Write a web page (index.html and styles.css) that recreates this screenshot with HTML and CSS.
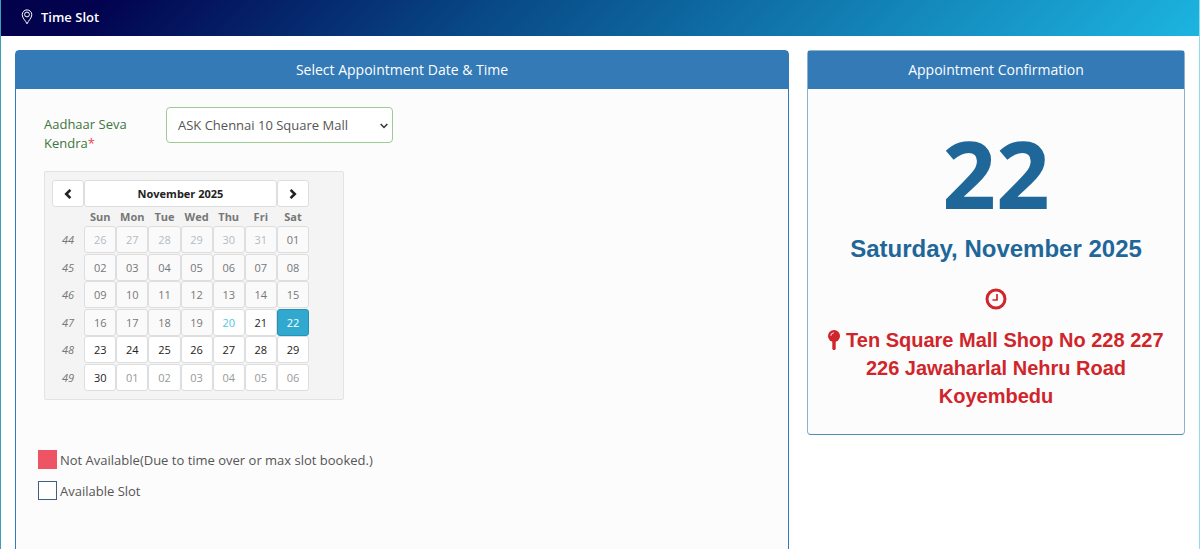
FILE: index.html
```
<!DOCTYPE html>
<html lang="en">
<head>
    <meta charset="UTF-8">
    <meta name="viewport" content="width=device-width, initial-scale=1.0">
    <title>Time Slot</title>
    <link rel="stylesheet" href="styles.css">
</head>

<body>
    <div class="page">

        <header class="page-header">
            <svg class="pin-outline" viewBox="0 0 12 16" fill="none" stroke="currentColor">
                <path d="M6 14.8 C4.5 11.5 1.2 9 1.2 5.7 A4.8 4.8 0 0 1 10.8 5.7 C10.8 9 7.5 11.5 6 14.8 Z" />
                <circle cx="6" cy="5.5" r="2.4" />
            </svg>
            <h1>Time Slot</h1>
        </header>

        <main class="content">

            <!-- Date selection -->
            <section class="panel">
                <h2 class="panel-heading">Select Appointment Date &amp; Time</h2>

                <form class="slot-form" action="#" method="post">
                    <div class="form-group">
                        <label for="kendra">Aadhaar Seva Kendra<span class="required">*</span></label>
                        <div class="select-box">
                            <select id="kendra" name="kendra">
                                <option>ASK Chennai 10 Square Mall</option>
                            </select>
                            <svg class="caret" viewBox="0 0 8 6" fill="none" stroke="currentColor" stroke-width="1.5">
                                <path d="M0.7 1 L4 4.5 L7.3 1" />
                            </svg>
                        </div>
                    </div>

                    <div class="calendar">
                        <table>
                            <thead>
                                <tr class="month-row">
                                    <th><button type="button" aria-label="Previous month"><svg class="chevron" viewBox="0 0 8 12"><path d="M6.4 1.8 L2.2 6 L6.4 10.2" /></svg></button></th>
                                    <th colspan="6"><button type="button" class="month">November 2025</button></th>
                                    <th><button type="button" aria-label="Next month"><svg class="chevron" viewBox="0 0 8 12"><path d="M1.6 1.8 L5.8 6 L1.6 10.2" /></svg></button></th>
                                </tr>
                                <tr class="day-names">
                                    <th></th>
                                    <th>Sun</th>
                                    <th>Mon</th>
                                    <th>Tue</th>
                                    <th>Wed</th>
                                    <th>Thu</th>
                                    <th>Fri</th>
                                    <th>Sat</th>
                                </tr>
                            </thead>
                            <tbody>
                                <tr>
                                    <td class="week">44</td>
                                    <td><button type="button" class="muted" disabled>26</button></td>
                                    <td><button type="button" class="muted" disabled>27</button></td>
                                    <td><button type="button" class="muted" disabled>28</button></td>
                                    <td><button type="button" class="muted" disabled>29</button></td>
                                    <td><button type="button" class="muted" disabled>30</button></td>
                                    <td><button type="button" class="muted" disabled>31</button></td>
                                    <td><button type="button" disabled>01</button></td>
                                </tr>
                                <tr>
                                    <td class="week">45</td>
                                    <td><button type="button" disabled>02</button></td>
                                    <td><button type="button" disabled>03</button></td>
                                    <td><button type="button" disabled>04</button></td>
                                    <td><button type="button" disabled>05</button></td>
                                    <td><button type="button" disabled>06</button></td>
                                    <td><button type="button" disabled>07</button></td>
                                    <td><button type="button" disabled>08</button></td>
                                </tr>
                                <tr>
                                    <td class="week">46</td>
                                    <td><button type="button" disabled>09</button></td>
                                    <td><button type="button" disabled>10</button></td>
                                    <td><button type="button" disabled>11</button></td>
                                    <td><button type="button" disabled>12</button></td>
                                    <td><button type="button" disabled>13</button></td>
                                    <td><button type="button" disabled>14</button></td>
                                    <td><button type="button" disabled>15</button></td>
                                </tr>
                                <tr>
                                    <td class="week">47</td>
                                    <td><button type="button" disabled>16</button></td>
                                    <td><button type="button" disabled>17</button></td>
                                    <td><button type="button" disabled>18</button></td>
                                    <td><button type="button" disabled>19</button></td>
                                    <td><button type="button" class="today" disabled>20</button></td>
                                    <td><button type="button">21</button></td>
                                    <td><button type="button" class="selected">22</button></td>
                                </tr>
                                <tr>
                                    <td class="week">48</td>
                                    <td><button type="button">23</button></td>
                                    <td><button type="button">24</button></td>
                                    <td><button type="button">25</button></td>
                                    <td><button type="button">26</button></td>
                                    <td><button type="button">27</button></td>
                                    <td><button type="button">28</button></td>
                                    <td><button type="button">29</button></td>
                                </tr>
                                <tr>
                                    <td class="week">49</td>
                                    <td><button type="button">30</button></td>
                                    <td><button type="button" class="next-month">01</button></td>
                                    <td><button type="button" class="next-month">02</button></td>
                                    <td><button type="button" class="next-month">03</button></td>
                                    <td><button type="button" class="next-month">04</button></td>
                                    <td><button type="button" class="next-month">05</button></td>
                                    <td><button type="button" class="next-month">06</button></td>
                                </tr>
                            </tbody>
                        </table>
                    </div>
                </form>

                <ul class="legend">
                    <li><span class="box booked"></span>Not Available(Due to time over or max slot booked.)</li>
                    <li><span class="box"></span>Available Slot</li>
                </ul>
            </section>

            <!-- Chosen appointment -->
            <section class="panel confirmation">
                <h2 class="panel-heading">Appointment Confirmation</h2>
                <div class="summary">
                    <div class="day-number">22</div>
                    <div class="full-date">Saturday, November 2025</div>
                    <svg class="clock" viewBox="0 0 22 22" fill="none" stroke="currentColor">
                        <circle cx="11" cy="11" r="9" stroke-width="3" />
                        <path d="M12 6 V12 H7.5" stroke-width="1.7" />
                    </svg>
                    <p class="address">
                        <svg class="pin" viewBox="0 0 12 20" fill="currentColor">
                            <circle cx="6" cy="6" r="6" />
                            <path d="M4.3 11 H7.7 V18.5 L7 20 H5 L4.3 18.5 Z" />
                            <path d="M2.8 5.8 A3.2 3.2 0 0 1 5.8 2.8" fill="none" stroke="#fcfcfc" stroke-width="0.9" />
                        </svg>
                        Ten Square Mall Shop No 228 227 226 Jawaharlal Nehru Road Koyembedu
                    </p>
                </div>
            </section>

        </main>
    </div>
</body>

</html>
```
FILE: styles.css
```
* {
    box-sizing: border-box;
}

body {
    margin: 0;
    font-family: "Open Sans", "Noto Sans", sans-serif;
    font-size: 13px;
    color: #555;
    background-color: #fff;
}

.page {
    display: flex;
    flex-direction: column;
    height: 100vh;
    overflow: hidden;
    border-left: 1px solid #3ba0b4;
    border-right: 1px solid #8fdcec;
}

.page-header {
    flex: none;
    display: flex;
    align-items: center;
    gap: 8px;
    height: 36px;
    padding: 0 20px 2px;
    color: #fff;
    background: linear-gradient(135deg, #02024b 0%, #02024f 8%, #084886 40%, #1cb5e0 100%);
}

.page-header h1 {
    margin: 0;
    font-size: 13px;
    font-weight: 600;
}

.pin-outline {
    width: 12px;
    height: 16px;
}

.content {
    flex: 1;
    display: grid;
    grid-template-columns: 43fr 21fr;
    gap: 18px;
    padding: 14px 14px 0;
    min-height: 0;
    align-items: start;
}

.panel {
    min-height: 100vh;
    border: 1px solid #337ab7;
    border-radius: 4px;
    background-color: #fcfcfc;
}

.confirmation {
    min-height: 0;
    border-color: #8fb3cc;
    border-bottom-color: #4f8fae;
}

.panel-heading {
    margin: 0;
    font-size: 14px;
    font-weight: 400;
    line-height: 38px;
    text-align: center;
    color: #fff;
    background-color: #337ab7;
}

.slot-form {
    padding: 18px 28px 0;
}

.form-group {
    display: flex;
    align-items: flex-start;
    color: #3c763d;
}

.form-group label {
    width: 122px;
    padding: 8px 30px 0 0;
    line-height: 19px;
}

.required {
    color: #e8434c;
}

.select-box {
    position: relative;
    width: 227px;
}

.select-box select {
    width: 100%;
    height: 36px;
    padding: 0 24px 0 11px;
    border: 1px solid #9ccc94;
    border-radius: 4px;
    font-family: inherit;
    font-size: 13px;
    color: #555;
    background-color: #fff;
    appearance: none;
}

.caret {
    position: absolute;
    right: 5px;
    top: 16px;
    width: 8px;
    height: 6px;
    color: #333;
    pointer-events: none;
}

/* Calendar */
.calendar {
    width: 300px;
    margin-top: 18px;
    padding: 8px 7px;
    border: 1px solid #e3e3e3;
    border-radius: 2px;
    background-color: #f4f4f4;
}

.calendar table {
    width: 257px;
    height: 211px;
    table-layout: fixed;
    border-collapse: collapse;
    font-size: 11px;
}

.calendar th,
.calendar td {
    height: 27px;
    padding: 0;
    text-align: center;
}

.calendar .day-names th {
    height: 19px;
    line-height: 19px;
    color: #777;
}

.calendar .week {
    font-style: italic;
    color: #777;
}

.calendar button {
    display: block;
    width: 100%;
    height: 27px;
    padding: 0;
    border: 1px solid #dedede;
    border-radius: 3px;
    font-family: inherit;
    font-size: 11px;
    color: #222;
    background-color: #fff;
}

.calendar button:disabled {
    color: #777;
    background-color: #fafafa;
}

.calendar button.muted {
    color: #b4bcc4;
}

.calendar button.next-month {
    color: #999;
}

.calendar button.month {
    font-weight: 700;
}

.calendar button.today {
    color: #4cc8e0;
    background-color: #fff;
}

.calendar button.selected {
    color: #fff;
    border-color: #2493b5;
    background-color: #31a9cf;
}

.chevron {
    display: block;
    width: 8px;
    height: 12px;
    margin: 0 auto;
    fill: none;
    stroke: #222;
    stroke-width: 2.6;
}

/* Legend */
.legend {
    margin: 0;
    padding: 50px 22px 0;
    list-style: none;
}

.legend li {
    display: flex;
    align-items: center;
    gap: 3px;
    height: 19px;
    margin-bottom: 12px;
}

.box {
    width: 19px;
    height: 19px;
    border: 1px solid #3f6080;
    background-color: #fff;
}

.booked {
    border-color: #ed5565;
    background-color: #ed5565;
}

/* Confirmation */
.summary {
    display: flex;
    flex-direction: column;
    align-items: center;
    padding: 30px 18px 24px;
    font-family: "Liberation Sans", Arial, sans-serif;
    font-weight: 700;
    text-align: center;
    color: #d0252b;
}

.day-number {
    font-family: "Open Sans", "Noto Sans", sans-serif;
    font-size: 94px;
    line-height: 108px;
    color: #1f6799;
}

.full-date {
    margin-top: 8px;
    font-size: 24px;
    line-height: 28px;
    color: #1f6799;
}

.clock {
    width: 22px;
    height: 22px;
    margin-top: 25px;
}

.address {
    margin: 16px 0 0;
    font-size: 20px;
    line-height: 28px;
}

.pin {
    width: 12px;
    height: 20px;
    vertical-align: -3px;
}
```
